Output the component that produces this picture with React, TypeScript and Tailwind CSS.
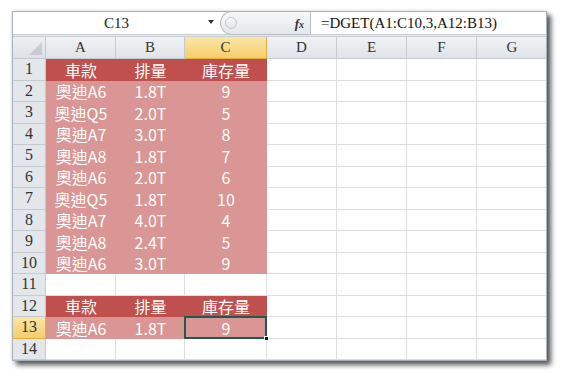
import React from 'react';

const cols = ['A', 'B', 'C', 'D', 'E', 'F', 'G'];

const tableRows: Array<string[] | null> = [
  ['車款', '排量', '庫存量'],
  ['奧迪A6', '1.8T', '9'],
  ['奧迪Q5', '2.0T', '5'],
  ['奧迪A7', '3.0T', '8'],
  ['奧迪A8', '1.8T', '7'],
  ['奧迪A6', '2.0T', '6'],
  ['奧迪Q5', '1.8T', '10'],
  ['奧迪A7', '4.0T', '4'],
  ['奧迪A8', '2.4T', '5'],
  ['奧迪A6', '3.0T', '9'],
  null,
  ['車款', '排量', '庫存量'],
  ['奧迪A6', '1.8T', '9'],
  null,
];

const headerRows = [1, 12];

export default function App() {
  return (
    <div className="w-[567px] h-[382px] bg-white pl-[12px] pt-[11px]">
      <div className="w-[535px] h-[350px] border border-[#a9b0b8] bg-white shadow-[4px_4px_5px_rgba(0,0,0,0.65),0_0_4px_rgba(0,0,0,0.12)] flex flex-col overflow-hidden">
        {/* formula bar */}
        <div className="h-[23px] flex border-b border-[#c8cdd3] bg-white">
          <div className="w-[207px] relative flex items-center justify-center font-['Liberation_Serif',serif] text-[15px] text-[#222]">
            C13
            <span className="absolute right-[6px] top-[8px] w-0 h-0 border-l-[3.5px] border-r-[3.5px] border-t-[4px] border-l-transparent border-r-transparent border-t-[#333]" />
          </div>
          <div className="w-[90px] flex items-center rounded-l-full border border-r-0 border-[#b7bcc3] bg-gradient-to-b from-[#f7f8fa] to-[#e4e7eb] -my-px">
            <span className="ml-[4px] w-[12px] h-[12px] rounded-full border border-[#c3c7cc] bg-gradient-to-b from-[#fafafa] to-[#e2e4e7]" />
            <span className="ml-auto mr-[6px] font-['Liberation_Serif',serif] italic font-bold text-[13px] text-[#333] leading-none">
              f<span className="text-[10px]">x</span>
            </span>
          </div>
          <div className="flex-1 flex items-center border-l border-[#b7bcc3] pl-[10px] font-['Liberation_Serif',serif] text-[15px] text-[#111]">
            =DGET(A1:C10,3,A12:B13)
          </div>
        </div>
        <div className="h-[2px] bg-[#e6e9ed] border-b border-[#c9ced4]" />

        {/* sheet */}
        <div className="grid grid-cols-[33px_70px_69px_82px_70px_70px_70px_71px] grid-rows-[22px_repeat(14,21.5px)] relative">
          {/* corner */}
          <div className="relative bg-gradient-to-b from-[#eef0f3] to-[#dde1e6] border-r border-b border-[#c3c8cf]">
            <span className="absolute right-[3px] bottom-[3px] w-0 h-0 border-l-[13px] border-t-[13px] border-l-transparent border-t-transparent border-r-0 border-b-0 border-b-[#c6cad0]" style={{ borderBottomWidth: 0 }} />
            <svg className="absolute right-[3px] bottom-[3px]" width="13" height="13" viewBox="0 0 13 13">
              <polygon points="13,0 13,13 0,13" fill="#c8ccd2" />
            </svg>
          </div>
          {cols.map((c) => (
            <div
              key={c}
              className={
                c === 'C'
                  ? "flex items-center justify-center bg-gradient-to-b from-[#fbe6a6] to-[#f6cd6a] border-r border-b border-[#e2ad3e] font-['Liberation_Serif',serif] text-[15px] text-[#333]"
                  : "flex items-center justify-center bg-gradient-to-b from-[#f1f3f5] to-[#dfe3e8] border-r border-b border-[#c5cad1] font-['Liberation_Serif',serif] text-[15px] text-[#333]"
              }
            >
              {c}
            </div>
          ))}

          {tableRows.map((row, i) => {
            const r = i + 1;
            const isHeader = headerRows.includes(r);
            return (
              <React.Fragment key={r}>
                <div
                  className={
                    r === 13
                      ? "flex items-center justify-center bg-gradient-to-b from-[#fbe6a6] to-[#f6cd6a] border-r border-b border-[#e2ad3e] font-['Liberation_Serif',serif] text-[16px] text-[#333]"
                      : "flex items-center justify-center bg-[#e3e7ec] border-r border-b border-[#c5cad1] font-['Liberation_Serif',serif] text-[16px] text-[#333]"
                  }
                >
                  {r}
                </div>
                {cols.map((c, ci) => {
                  const text = row && ci < 3 ? row[ci] : null;
                  if (text === null) {
                    return <div key={c} className="border-r border-b border-[#dcdfe2]" />;
                  }
                  return (
                    <div
                      key={c}
                      className={
                        (isHeader ? 'bg-[#c0504d] ' : 'bg-[#da9694] ') +
                        "flex items-center justify-center leading-none text-white text-[16px] font-['Noto_Sans_CJK_TC','Noto_Sans',sans-serif]"
                      }
                    >
                      {text}
                    </div>
                  );
                })}
              </React.Fragment>
            );
          })}

          {/* selected cell C13 */}
          <div className="absolute left-[171px] top-[279px] w-[83px] h-[23px] border-2 border-[#21584f] pointer-events-none">
            <span className="absolute -right-[4px] -bottom-[4px] w-[5px] h-[5px] bg-[#111] border border-white" />
          </div>
        </div>
      </div>
    </div>
  );
}
